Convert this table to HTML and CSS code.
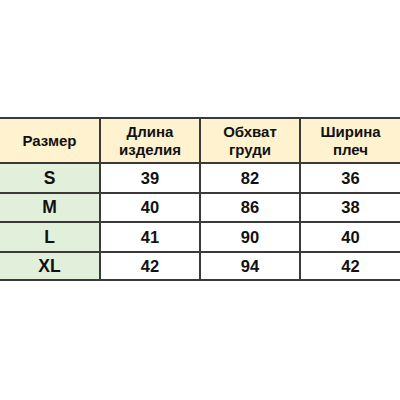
FILE: index.html
```html
<!DOCTYPE html>
<html>
<head>
<meta charset="utf-8">
<link rel="stylesheet" href="styles.css">
</head>
<body>
<div class="table">
  <div class="cell head">Размер</div>
  <div class="cell head">Длина<br>изделия</div>
  <div class="cell head">Обхват<br>груди</div>
  <div class="cell head">Ширина<br>плеч</div>

  <div class="cell size">S</div>
  <div class="cell">39</div>
  <div class="cell">82</div>
  <div class="cell">36</div>

  <div class="cell size">M</div>
  <div class="cell">40</div>
  <div class="cell">86</div>
  <div class="cell">38</div>

  <div class="cell size">L</div>
  <div class="cell">41</div>
  <div class="cell">90</div>
  <div class="cell">40</div>

  <div class="cell size">XL</div>
  <div class="cell">42</div>
  <div class="cell">94</div>
  <div class="cell">42</div>
</div>
</body>
</html>
```

FILE: styles.css
```css
html, body {
  margin: 0;
  padding: 0;
  background: #ffffff;
  width: 400px;
  height: 400px;
  overflow: hidden;
}
body {
  padding-top: 117px;
  box-sizing: border-box;
}
.table {
  display: grid;
  grid-template-columns: 99px 98px 98px 99px;
  grid-template-rows: 43px 28px 27px 28px 26px;
  gap: 2px;
  padding: 2px 0;
  background: #3a3a3a;
  width: 400px;
  font-family: "Liberation Sans", Arial, sans-serif;
  font-weight: bold;
  color: #111111;
}
.cell {
  background: #ffffff;
  display: flex;
  align-items: center;
  justify-content: center;
  text-align: center;
  font-size: 16.5px;
}
.head {
  background: #fff2cf;
  font-size: 15px;
  line-height: 18px;
}
.size {
  background: #e2efda;
  font-size: 17.5px;
}
```
